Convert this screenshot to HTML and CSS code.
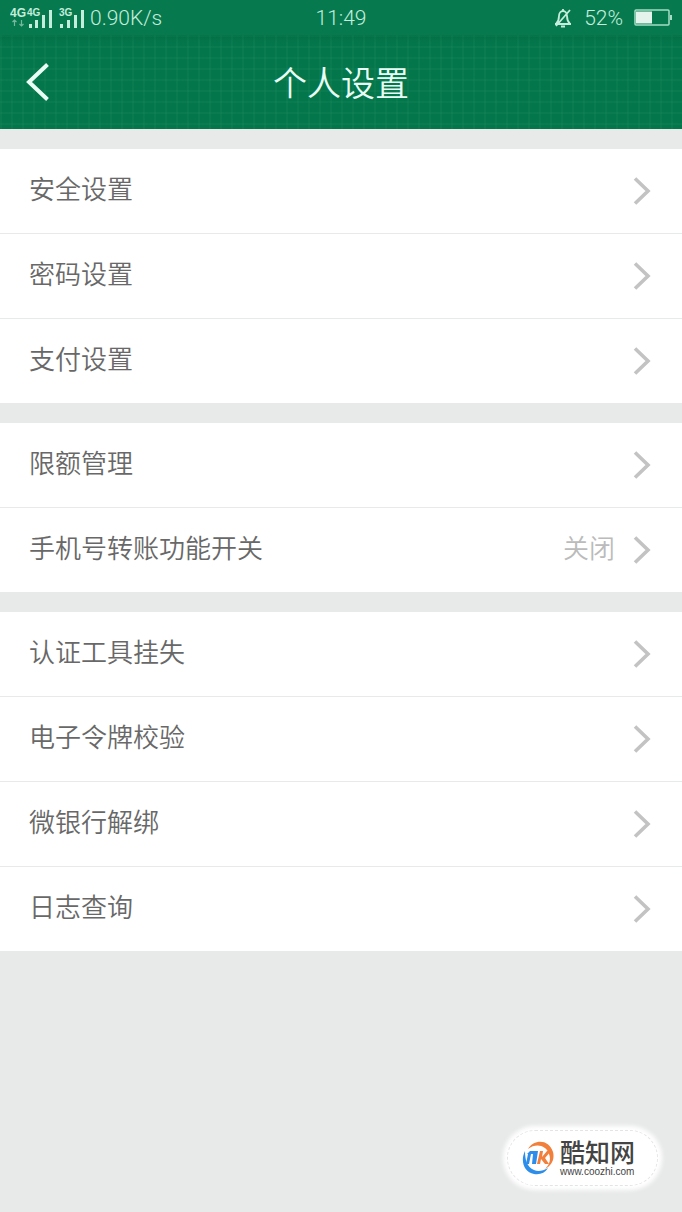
FILE: index.html
```html
<!DOCTYPE html>
<html lang="zh-CN">
<head>
<meta charset="utf-8">
<meta name="viewport" content="width=device-width, initial-scale=1">
<title>个人设置</title>
<link rel="stylesheet" href="styles.css">
</head>
<body>
<svg class="sprite" aria-hidden="true">
  <symbol id="chevron" viewBox="0 0 18 30"><path d="M2 2.500 15 15 2 27.500" fill="none" stroke="currentColor" stroke-width="3.600"/></symbol>
</svg>
<div class="status">
  <div class="status-left">
    <svg class="signal" viewBox="0 0 76 22" aria-hidden="true">
      <g class="net">
        <text class="net-main" x="0" y="10">4G</text>
        <text class="net-small" x="17" y="9">4G</text>
        <text class="net-small" x="49" y="9">3G</text>
      </g>
      <path d="M4.500 19v-6M2.500 15l2-2 2 2M11.500 13v6M9.500 17l2 2 2-2" fill="none" stroke="#76b79d" stroke-width="1.200"/>
      <path d="M19 17h3v4h-3zM25 13h3v8h-3zM32 8h3v13h-3zM39 3h3v18h-3zM50 17h3v4h-3zM57 13h3v8h-3zM64 8h3v13h-3zM71 3h3v18h-3z" fill="#c5eddd"/>
    </svg>
    <span>0.90K/s</span>
  </div>
  <time class="clock">11:49</time>
  <div class="status-right">
    <svg class="bell" viewBox="0 0 20 20" fill="none" stroke="currentColor" stroke-width="1.800" aria-hidden="true"><path d="M2 16h16M3 16c2-2 3-4 3-8 0-3 2-5 4-5s4 2 4 5c0 4 1 6 3 8M10 1v2M8 18.500h4M17 2 3 18"/></svg>
    <span>52%</span>
    <svg class="battery" viewBox="0 0 38 18" aria-hidden="true"><rect x="1" y="1" width="34" height="15" rx="1" fill="none" stroke="#a5dcc6" stroke-width="1.500"/><path d="M2 2.500h16v12H2z" fill="#e4f4ed"/><path d="M36 6h2v5h-2z" fill="#a5dcc6"/></svg>
  </div>
</div>
<header class="titlebar">
  <button class="back" type="button" aria-label="返回"><svg viewBox="0 0 24 40" aria-hidden="true"><path d="M21.500 2.500 3 20l18.500 17.500" fill="none" stroke="currentColor" stroke-width="4"/></svg></button>
  <h1>个人设置</h1>
</header>
<main class="groups">
  <nav class="group">
    <a class="row" href="#security"><span class="label">安全设置</span><svg class="chevron"><use href="#chevron"/></svg></a>
    <a class="row" href="#password"><span class="label">密码设置</span><svg class="chevron"><use href="#chevron"/></svg></a>
    <a class="row" href="#payment"><span class="label">支付设置</span><svg class="chevron"><use href="#chevron"/></svg></a>
  </nav>
  <nav class="group">
    <a class="row" href="#limits"><span class="label">限额管理</span><svg class="chevron"><use href="#chevron"/></svg></a>
    <a class="row" href="#transfer"><span class="label">手机号转账功能开关</span><span class="value">关闭</span><svg class="chevron"><use href="#chevron"/></svg></a>
  </nav>
  <nav class="group">
    <a class="row" href="#report-loss"><span class="label">认证工具挂失</span><svg class="chevron"><use href="#chevron"/></svg></a>
    <a class="row" href="#token"><span class="label">电子令牌校验</span><svg class="chevron"><use href="#chevron"/></svg></a>
    <a class="row" href="#unbind"><span class="label">微银行解绑</span><svg class="chevron"><use href="#chevron"/></svg></a>
    <a class="row" href="#log"><span class="label">日志查询</span><svg class="chevron"><use href="#chevron"/></svg></a>
  </nav>
</main>
<footer class="footer">
  <div class="brand">
    <svg class="logo" viewBox="0 0 32 34" aria-hidden="true">
      <path d="M6 8C12-2 27-2 31 11c2 8-2 14-8 17 5-5 6-10 4-15C24 4 14 2 6 8z" fill="#f0803c"/>
      <path d="M3 10C-2 20 2 31 12 33c6 1 11-1 14-6-5 3-10 4-14 2C5 26 3 19 3 10z" fill="#2c8eea"/>
      <path d="M8 10h8l-2 13h-4l1-10H9L7 23H4l2-10H5z" fill="#2c8eea"/>
      <path d="M18 10h3l-1 6 5-6h4l-6 7 4 6h-4l-4-5-1 5h-3z" fill="#f0803c"/>
    </svg>
    <div class="brand-text"><strong>酷知网</strong><span>www.coozhi.com</span></div>
  </div>
</footer>
</body>
</html>
```
FILE: styles.css
```css
* { box-sizing: border-box; }
body {
  margin: 0;
  min-height: 100vh;
  display: flex;
  flex-direction: column;
  background: #e8eae9;
  color: #686868;
  font-family: "Noto Sans CJK SC", sans-serif;
  font-weight: 350;
}
.sprite { position: absolute; width: 0; height: 0; }
.status {
  display: grid;
  grid-template-columns: 1fr auto 1fr;
  align-items: center;
  height: 35px;
  padding: 0 10px;
  background: #067a4e;
  color: #c5eddd;
  font-family: Roboto, sans-serif;
  font-weight: 300;
  font-size: 21px;
}
.status-left, .status-right { display: flex; align-items: center; }
.status-left { gap: 4px; }
.status-right { justify-content: flex-end; gap: 11px; }
.signal { width: 76px; height: 22px; }
.net { fill: #c5eddd; font-family: "Liberation Sans", sans-serif; font-weight: 700; }
.net-main { font-size: 12px; }
.net-small { font-size: 10px; }
.bell { width: 20px; height: 20px; }
.battery { width: 38px; height: 18px; }
.titlebar {
  display: grid;
  grid-template-columns: 1fr auto 1fr;
  align-items: center;
  height: 94px;
  padding: 0 25px;
  background-color: #04764b;
  background-image:
    linear-gradient(#005b3440, transparent 8px),
    repeating-linear-gradient(90deg, #21906330 0 2px, transparent 2px 11px),
    repeating-linear-gradient(#21906330 0 2px, transparent 2px 11px);
  color: #e9fff6;
}
.titlebar h1 { margin: 0; font-size: 34px; line-height: 48px; font-weight: 350; }
.back { justify-self: start; padding: 0; border: 0; background: none; color: inherit; }
.back svg { display: block; width: 26px; height: 40px; }
.groups { display: grid; gap: 20px; padding-top: 20px; }
.group { background: #fff; }
.row {
  display: flex;
  align-items: center;
  height: 84px;
  padding: 0 31px 0 29px;
  color: inherit;
  text-decoration: none;
  font-size: 26px;
  line-height: 40px;
}
.row + .row { height: 85px; border-top: 1px solid #e8eae9; }
.label { flex: 1; padding-bottom: 6px; }
.value { margin-right: 18px; padding-bottom: 6px; color: #bbb; }
.chevron { width: 18px; height: 30px; color: #c3c3c3; }
.footer { display: flex; justify-content: flex-end; margin-top: auto; padding: 20px 24px 26px; }
.brand {
  display: flex;
  align-items: center;
  gap: 6px;
  height: 56px;
  padding: 0 22px 0 14px;
  border: 1px dashed #e4e4e4;
  border-radius: 28px;
  background: #fff;
  box-shadow: 0 0 4px 4px #fff;
}
.logo { width: 32px; height: 34px; }
.brand-text { display: grid; color: #444; }
.brand-text strong { font-size: 25px; line-height: 28px; font-weight: 500; }
.brand-text span { font-family: "Liberation Sans", sans-serif; font-size: 10px; line-height: 14px; font-weight: 400; }
```
